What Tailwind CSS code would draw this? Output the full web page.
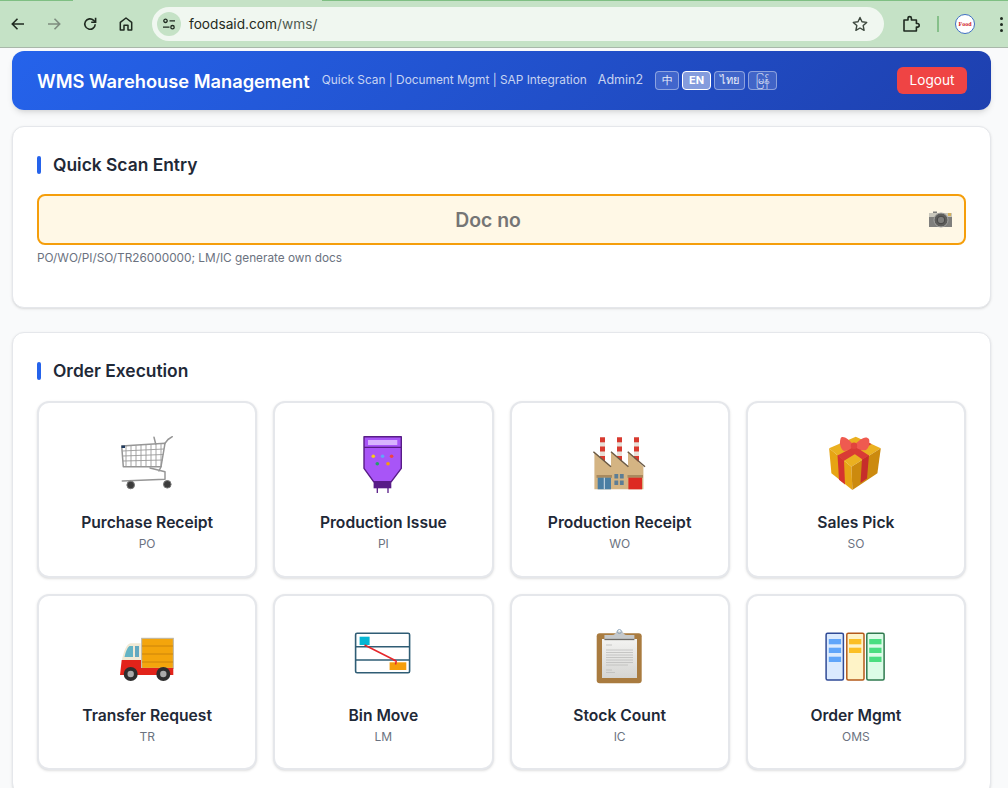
<!DOCTYPE html>
<html lang="en">
<head>
<meta charset="utf-8">
<title>WMS Warehouse Management</title>
<script src="https://cdn.jsdelivr.net/npm/@tailwindcss/browser@4"></script>
</head>
<body class="h-screen overflow-hidden bg-[#f9fafb] font-['Inter','Noto_Sans',sans-serif]">
<div class="flex h-[48px] flex-col border-b border-[#a9b8aa] bg-[#c5e2c6]">
  <div class="flex h-px shrink-0"><div class="w-[73px] bg-[#7fbf83]"></div><div class="w-[249px]"></div><div class="flex-1 bg-[#7fbf83]"></div></div>
  <div class="flex h-[46px] items-center">
    <div class="flex w-[152px] items-center text-[#1f2a20]">
      <svg class="ml-[10px] h-4 w-4" viewBox="0 0 16 16" fill="none" stroke="currentColor" stroke-width="1.6"><path d="M14 8H2.500M7.500 2.800 2.300 8l5.200 5.200"/></svg>
      <svg class="ml-[20px] h-4 w-4 text-[#7d8c7e]" viewBox="0 0 16 16" fill="none" stroke="currentColor" stroke-width="1.6"><path d="M2 8h11.500M8.500 2.800 13.700 8l-5.200 5.200"/></svg>
      <svg class="ml-[20px] h-4 w-4" viewBox="0 0 16 16" fill="none" stroke="currentColor" stroke-width="1.6"><path d="M13.200 8.200A5.200 5.200 0 1 1 11.600 4.300L13.400 6"/><path d="M13.600 1.800V6.200H9.200"/></svg>
      <svg class="ml-[20px] h-4 w-4" viewBox="0 0 16 16" fill="none" stroke="currentColor" stroke-width="1.5" stroke-linejoin="round"><path d="M2.300 14V6.400L8 2l5.700 4.400V14H10V9.300H6V14Z"/></svg>
    </div>
    <div class="flex h-[34px] w-[732px] items-center rounded-full bg-[#f0f7f0] pl-[5px]">
      <div class="flex h-6 w-6 items-center justify-center rounded-full bg-[#c5e2c6]">
        <svg class="h-4 w-4 text-[#1f2a20]" viewBox="0 0 16 16" fill="none" stroke="currentColor" stroke-width="1.3"><circle cx="4.500" cy="4.800" r="1.700"/><path d="M8.500 4.800H14M2 11.200h6.500"/><circle cx="11.500" cy="11.200" r="1.700"/></svg>
      </div>
      <div class="ml-[8px] text-[13.700px] text-[#1f2a20]">foodsaid.com<span class="text-[#4f5a50]">/wms/</span></div>
      <svg class="ml-auto mr-[16px] h-4 w-4 text-[#3c473d]" viewBox="0 0 16 16" fill="none" stroke="currentColor" stroke-width="1.4" stroke-linejoin="round"><path d="m8 1.500 2 4.300 4.700.6-3.500 3.200.9 4.700L8 12l-4.100 2.300.9-4.700L1.300 6.400 6 5.800Z"/></svg>
    </div>
    <svg class="ml-[18px] h-[18px] w-[18px] text-[#1f2a20]" viewBox="0 0 18 18" fill="none" stroke="currentColor" stroke-width="1.600" stroke-linejoin="round"><path d="M2 5h4V3.300a1.700 1.700 0 0 1 3.400 0V5h5v3.500h1a1.800 1.800 0 0 1 0 3.600h-1V16H2Z"/></svg>
    <div class="ml-[17px] h-4 w-[2px] bg-[#86c08a]"></div>
    <div class="ml-[16px] flex h-[20px] w-[20px] items-center justify-center overflow-hidden rounded-full border border-[#3f6fc4] bg-white font-['Liberation_Serif',serif] text-[6px] font-bold text-[#d0202a]">Food</div>
    <div class="ml-[25px] flex flex-col gap-[3px]"><div class="h-[3px] w-[3px] rounded-full bg-[#1f2a20]"></div><div class="h-[3px] w-[3px] rounded-full bg-[#1f2a20]"></div><div class="h-[3px] w-[3px] rounded-full bg-[#1f2a20]"></div></div>
  </div>
</div>

<main class="pl-3 pr-[17px] pt-[3px]">
  <header class="flex h-[59px] items-center rounded-xl bg-linear-[135deg,#2563eb,#1e40af] pl-[25px] pr-6 text-white shadow-md">
    <h1 class="pt-[2px] text-[18.270px] font-semibold">WMS Warehouse Management</h1>
    <span class="ml-3 text-[11.870px] text-white/75">Quick Scan | Document Mgmt | SAP Integration</span>
    <span class="ml-[11px] text-[12.500px] text-white/75">Admin2</span>
    <div class="ml-3 flex gap-[3px]">
      <button class="h-[19px] w-6 rounded-[4px] border border-white/40 bg-white/15 text-[11px] text-white/90">中</button>
      <button class="h-[19px] w-[29px] rounded-[4px] border border-white bg-white/45 text-[11px] font-bold text-white">EN</button>
      <button class="h-[19px] w-[31px] rounded-[4px] border border-white/40 bg-white/15 font-['Noto_Sans','DejaVu_Sans',sans-serif] text-[11px] text-white/90">ไทย</button>
      <button class="h-[19px] w-[29px] rounded-[4px] border border-white/40 bg-white/15 font-['Noto_Sans','DejaVu_Sans',sans-serif] text-[11px] text-white/90">မြန်</button>
    </div>
    <button class="ml-auto h-[27px] w-[70px] rounded-md bg-[#ef4444] text-[13.600px] text-white">Logout</button>
  </header>

  <section class="mt-4 h-[182px] rounded-xl border border-[#e5e7eb] bg-white px-6 pt-[24px] shadow-sm">
    <h2 class="flex h-[28px] items-center gap-3 text-[17.400px] font-semibold text-[#1f2937]"><span class="h-[18px] w-1 rounded-sm bg-[#2563eb]"></span>Quick Scan Entry</h2>
    <div class="relative mt-[15px]">
      <input class="block h-[51px] w-full rounded-lg border-2 border-[#f59e0b] bg-[#fff8e6] pr-[27px] text-center text-[19.400px] font-semibold placeholder:text-[#757575]" placeholder="Doc no">
      <svg class="absolute right-[13px] top-[16px] h-[18px] w-[25px]" viewBox="0 0 25 18">
        <path d="M1 3h4V1.500h4V3h15v14H1Z" fill="#7f7f7d"/><rect x="1" y="3" width="23" height="4" fill="#c9c7bc"/><rect x="20" y="3" width="3" height="3" fill="#d4b15c"/>
        <circle cx="13" cy="10" r="7" fill="#5d5d5b" stroke="#a5a5a3"/><circle cx="13" cy="10" r="3.800" fill="#7d7d7b" stroke="#444"/>
      </svg>
    </div>
    <p class="mt-[5px] text-[11.800px] text-[#6b7280]">PO/WO/PI/SO/TR26000000; LM/IC generate own docs</p>
  </section>

  <section class="mt-6 rounded-xl border border-[#e5e7eb] bg-white px-6 pb-6 pt-[24px] shadow-sm">
    <h2 class="flex h-[28px] items-center gap-3 text-[17.400px] font-semibold text-[#1f2937]"><span class="h-[18px] w-1 rounded-sm bg-[#2563eb]"></span>Order Execution</h2>
    <div class="mt-[16px] grid grid-cols-4 gap-4">

      <a class="flex h-[176.500px] flex-col items-center rounded-xl border-2 border-[#e5e7eb] bg-white pt-[28px] shadow-sm">
        <svg class="h-16 w-16" viewBox="0 0 64 64" fill="none">
          <g stroke="#9a9a9a" stroke-width=".9"><path d="M11 15v21M16 14.500V36M21 14.200V36M26 14V36M31 13.700V36M36 13.400V36M41 13V36M46 12.800V36M7.500 20 49 18M8 25l40.500-1.500M8 30l40-1"/></g>
          <g stroke="#969696" stroke-width="1.500" stroke-linecap="round" stroke-linejoin="round"><path d="M6.700 15 50 12.300 46 35.700H8.300Z"/><path d="M50 12.300 53 8.500 57.300 5.700M39 6.300 40.700 13M35 37l15 3.700V48.300L7.300 50M46 35.700 44 40"/></g>
          <rect x="6.500" y="14.500" width="3.500" height="2.500" fill="#1f3a5f"/>
          <circle cx="15.700" cy="54" r="3.800" fill="#3c3c3c" stroke="#777"/><circle cx="52.300" cy="53.300" r="3.800" fill="#3c3c3c" stroke="#777"/>
        </svg>
        <div class="mt-[16px] text-[15.650px] font-semibold text-[#1f2937]">Purchase Receipt</div>
        <div class="mt-[1px] text-[12px] text-[#6b7280]">PO</div>
      </a>

      <a class="flex h-[176.500px] flex-col items-center rounded-xl border-2 border-[#e5e7eb] bg-white pt-[28px] shadow-sm">
        <svg class="h-16 w-16" viewBox="0 0 64 64" fill="none">
          <path d="M26.300 57v5M37 57v5" stroke="#581c87" stroke-width="1.300"/>
          <rect x="22.600" y="50" width="17.700" height="7.300" fill="#581c87"/>
          <path d="M13 5.700h37.300V37.300L40.300 50.700H22.600L13 37.300Z" fill="#a855f7" stroke="#581c87" stroke-width="1.400" stroke-linejoin="round"/>
          <path d="M13 16.300h37.300" stroke="#581c87" stroke-width="1.200"/>
          <rect x="17" y="9" width="29.300" height="5" fill="#d8b4fe"/>
          <circle cx="22.300" cy="25.300" r="1.800" fill="#facc15"/><circle cx="31.600" cy="25.300" r="1.800" fill="#60a5fa"/><circle cx="40.600" cy="25.300" r="1.800" fill="#ef4444"/><circle cx="26.300" cy="32.700" r="1.800" fill="#22a06b"/><circle cx="37" cy="32.700" r="1.800" fill="#f59e0b"/>
        </svg>
        <div class="mt-[16px] text-[15.650px] font-semibold text-[#1f2937]">Production Issue</div>
        <div class="mt-[1px] text-[12px] text-[#6b7280]">PI</div>
      </a>

      <a class="flex h-[176.500px] flex-col items-center rounded-xl border-2 border-[#e5e7eb] bg-white pt-[28px] shadow-sm">
        <svg class="h-16 w-16" viewBox="0 0 64 64" fill="none">
          <g fill="#e8e0d8"><rect x="12" y="6.300" width="5" height="24"/><rect x="29" y="6.300" width="5" height="24"/><rect x="46" y="6.300" width="5" height="24"/></g>
          <g fill="#d93a2f"><rect x="12" y="6.300" width="5" height="5"/><rect x="29" y="6.300" width="5" height="5"/><rect x="46" y="6.300" width="5" height="5"/><rect x="12" y="15.500" width="5" height="5"/><rect x="29" y="15.500" width="5" height="5"/><rect x="46" y="15.500" width="5" height="5"/><rect x="12" y="25" width="5" height="6"/><rect x="29" y="25" width="5" height="6"/><rect x="46" y="25" width="5" height="6"/></g>
          <path d="M6.400 21 23 35.700V21L40 35.700V21L55.400 35.700V58.300H6.400Z" fill="#d4b483"/>
          <path d="M5.400 20.700 23 35.700M23 20.700 40.400 35.700M39.700 20.700 57 35.700" stroke="#6b5a45" stroke-width="1.500"/>
          <rect x="8.500" y="44" width="15.500" height="2.800" fill="#a98a5f"/><rect x="39.500" y="44" width="15.500" height="2.800" fill="#a98a5f"/>
          <rect x="9.700" y="46.700" width="13.300" height="11.600" fill="#4a7ea3"/><path d="M16.300 46.700v11.600" stroke="#d4e2ea"/>
          <rect x="40.400" y="46.700" width="13.600" height="11.600" fill="#dd2a22"/>
          <g fill="#5c7d95"><rect x="26.400" y="43" width="3.800" height="4.500"/><rect x="31.900" y="43" width="3.800" height="4.500"/><rect x="26.400" y="49.500" width="3.800" height="4.500"/><rect x="31.900" y="49.500" width="3.800" height="4.500"/></g>
        </svg>
        <div class="mt-[16px] text-[15.650px] font-semibold text-[#1f2937]">Production Receipt</div>
        <div class="mt-[1px] text-[12px] text-[#6b7280]">WO</div>
      </a>

      <a class="flex h-[176.500px] flex-col items-center rounded-xl border-2 border-[#e5e7eb] bg-white pt-[28px] shadow-sm">
        <svg class="h-16 w-16" viewBox="0 0 64 64" fill="none">
          <path d="M5.100 17.300 31.800 5.700 56.800 17.300 27.400 35.700Z" fill="#eab020"/>
          <path d="M5.100 17.300 27.400 35.700 28.400 59 7.400 42.300Z" fill="#e6a414"/>
          <path d="M27.400 35.700 56.800 17.300 53.400 42.300 28.400 59Z" fill="#cc8a0e"/>
          <path d="M13.500 24 20 29.300 21 53.500 15 48.800Z" fill="#d5332f"/>
          <path d="M38 28.500 45 24 43 47.500 36.500 52Z" fill="#c62d2b"/>
          <path d="M13.500 24.500 20 29.800 47.500 13 41 10Z" fill="#d93b35"/>
          <path d="M38.500 28.500 45 24.500 22 9.800 15.500 12.600Z" fill="#d93b35"/>
          <path d="M30 15C24 6 17 4 16.500 8 15 12 17 19 20 20 24 20 28 17 30 15Z" fill="#ef5a50"/>
          <path d="M30 15C35 8 42 4 45 8 46 12 45 17 42 19 38 20 33 18 30 15Z" fill="#ef5a50"/>
          <circle cx="30" cy="14.700" r="3.200" fill="#e2443d"/>
        </svg>
        <div class="mt-[16px] text-[15.650px] font-semibold text-[#1f2937]">Sales Pick</div>
        <div class="mt-[1px] text-[12px] text-[#6b7280]">SO</div>
      </a>

      <a class="flex h-[176.500px] flex-col items-center rounded-xl border-2 border-[#e5e7eb] bg-white pt-[28px] shadow-sm">
        <svg class="h-16 w-16" viewBox="0 0 64 64" fill="none">
          <rect x="26.700" y="14.300" width="31.600" height="30" fill="#f4a50c" stroke="#b8b5a8"/>
          <path d="M27 22h31M27 30h31M27 38h31" stroke="#cc840a"/>
          <path d="M25.700 19.300H15.500C12 19.300 8 28 6.700 37.700H25.700Z" fill="#f1e9d4"/>
          <path d="M14.500 22H18V33H9.500C10.500 28 12 24 14.500 22Z" fill="#63b3c4"/><rect x="20" y="22" width="4" height="11" fill="#63a8c0"/>
          <path d="M6.700 36H26V44H58.300L58.300 51H5Z" fill="#e2231a"/>
          <circle cx="15.700" cy="50" r="7" fill="#2e2e2e"/><circle cx="15.700" cy="50" r="3.200" fill="#aaa"/><circle cx="48.300" cy="50" r="7" fill="#2e2e2e"/><circle cx="48.300" cy="50" r="3.200" fill="#aaa"/>
        </svg>
        <div class="mt-[16px] text-[15.650px] font-semibold text-[#1f2937]">Transfer Request</div>
        <div class="mt-[1px] text-[12px] text-[#6b7280]">TR</div>
      </a>

      <a class="flex h-[176.500px] flex-col items-center rounded-xl border-2 border-[#e5e7eb] bg-white pt-[28px] shadow-sm">
        <svg class="h-16 w-16" viewBox="0 0 64 64" fill="none">
          <rect x="8.600" y="12.700" width="10" height="8.300" fill="#06b6d4"/>
          <rect x="38.600" y="38.300" width="16.700" height="7.700" fill="#f59e0b"/>
          <rect x="4.600" y="9.300" width="54" height="39.400" rx="1.500" stroke="#2f5d75" stroke-width="1.600"/>
          <path d="M4.600 22.700h54M4.600 36h54" stroke="#2f5d75" stroke-width="1.400"/>
          <path d="M13.600 21 45.300 37M45.300 37l-.8 3.500M45.300 37l-3-1" stroke="#e5262a" stroke-width="1.500"/>
        </svg>
        <div class="mt-[16px] text-[15.650px] font-semibold text-[#1f2937]">Bin Move</div>
        <div class="mt-[1px] text-[12px] text-[#6b7280]">LM</div>
      </a>

      <a class="flex h-[176.500px] flex-col items-center rounded-xl border-2 border-[#e5e7eb] bg-white pt-[28px] shadow-sm">
        <svg class="h-16 w-16" viewBox="0 0 64 64" fill="none">
          <defs><linearGradient id="paper" x1="0" y1="0" x2="0" y2="1"><stop offset="0" stop-color="#f3f3f1"/><stop offset="1" stop-color="#d5d5d3"/></linearGradient></defs>
          <rect x="8.700" y="9.300" width="45" height="50" rx="3" fill="#a97b3f"/>
          <rect x="14" y="15" width="35" height="39" fill="url(#paper)"/>
          <path d="M16.400 11h30v4h-30Z" fill="#c5c8ca"/><path d="M16.400 15.500h30" stroke="#6d6a66" stroke-width="1.300"/>
          <path d="M24 11c3 0 4-2 4-3.500h7c0 1.500 1 3.500 4 3.500Z" fill="#c5c8ca"/><circle cx="31.400" cy="7.500" r="2" stroke="#8ea6bb"/>
          <path d="M18 21h6M18 26h27M18 28.500h27M18 31h27M18 33.500h27M18 36h27M18 38.500h27M18 41h22M18 46h6M18 48.500h9" stroke="#bdbdbb" stroke-width=".8"/>
        </svg>
        <div class="mt-[16px] text-[15.650px] font-semibold text-[#1f2937]">Stock Count</div>
        <div class="mt-[1px] text-[12px] text-[#6b7280]">IC</div>
      </a>

      <a class="flex h-[176.500px] flex-col items-center rounded-xl border-2 border-[#e5e7eb] bg-white pt-[28px] shadow-sm">
        <svg class="h-16 w-16" viewBox="0 0 64 64" fill="none">
          <rect x="2.100" y="9.300" width="17.300" height="46.700" rx="1.500" fill="#dbeafe" stroke="#2f4a96" stroke-width="1.500"/>
          <rect x="22.800" y="9.300" width="17.200" height="46.700" rx="1.500" fill="#fef3c7" stroke="#b45a1a" stroke-width="1.500"/>
          <rect x="42.800" y="9.300" width="17.300" height="46.700" rx="1.500" fill="#dcfce7" stroke="#2f7a4f" stroke-width="1.500"/>
          <g fill="#60a5fa"><rect x="4.800" y="15" width="12.300" height="5.300"/><rect x="4.800" y="23.700" width="12.300" height="5.300"/><rect x="4.800" y="32.700" width="12.300" height="5.300"/></g>
          <g fill="#fbbf24"><rect x="25" y="15" width="12.300" height="5.300"/><rect x="25" y="23.700" width="12.300" height="5.300"/></g>
          <g fill="#4ade80"><rect x="45.200" y="15" width="12.300" height="5.300"/><rect x="45.200" y="23.700" width="12.300" height="5.300"/><rect x="45.200" y="32.700" width="12.300" height="5.300"/></g>
        </svg>
        <div class="mt-[16px] text-[15.650px] font-semibold text-[#1f2937]">Order Mgmt</div>
        <div class="mt-[1px] text-[12px] text-[#6b7280]">OMS</div>
      </a>

    </div>
  </section>
</main>
</body>
</html>
